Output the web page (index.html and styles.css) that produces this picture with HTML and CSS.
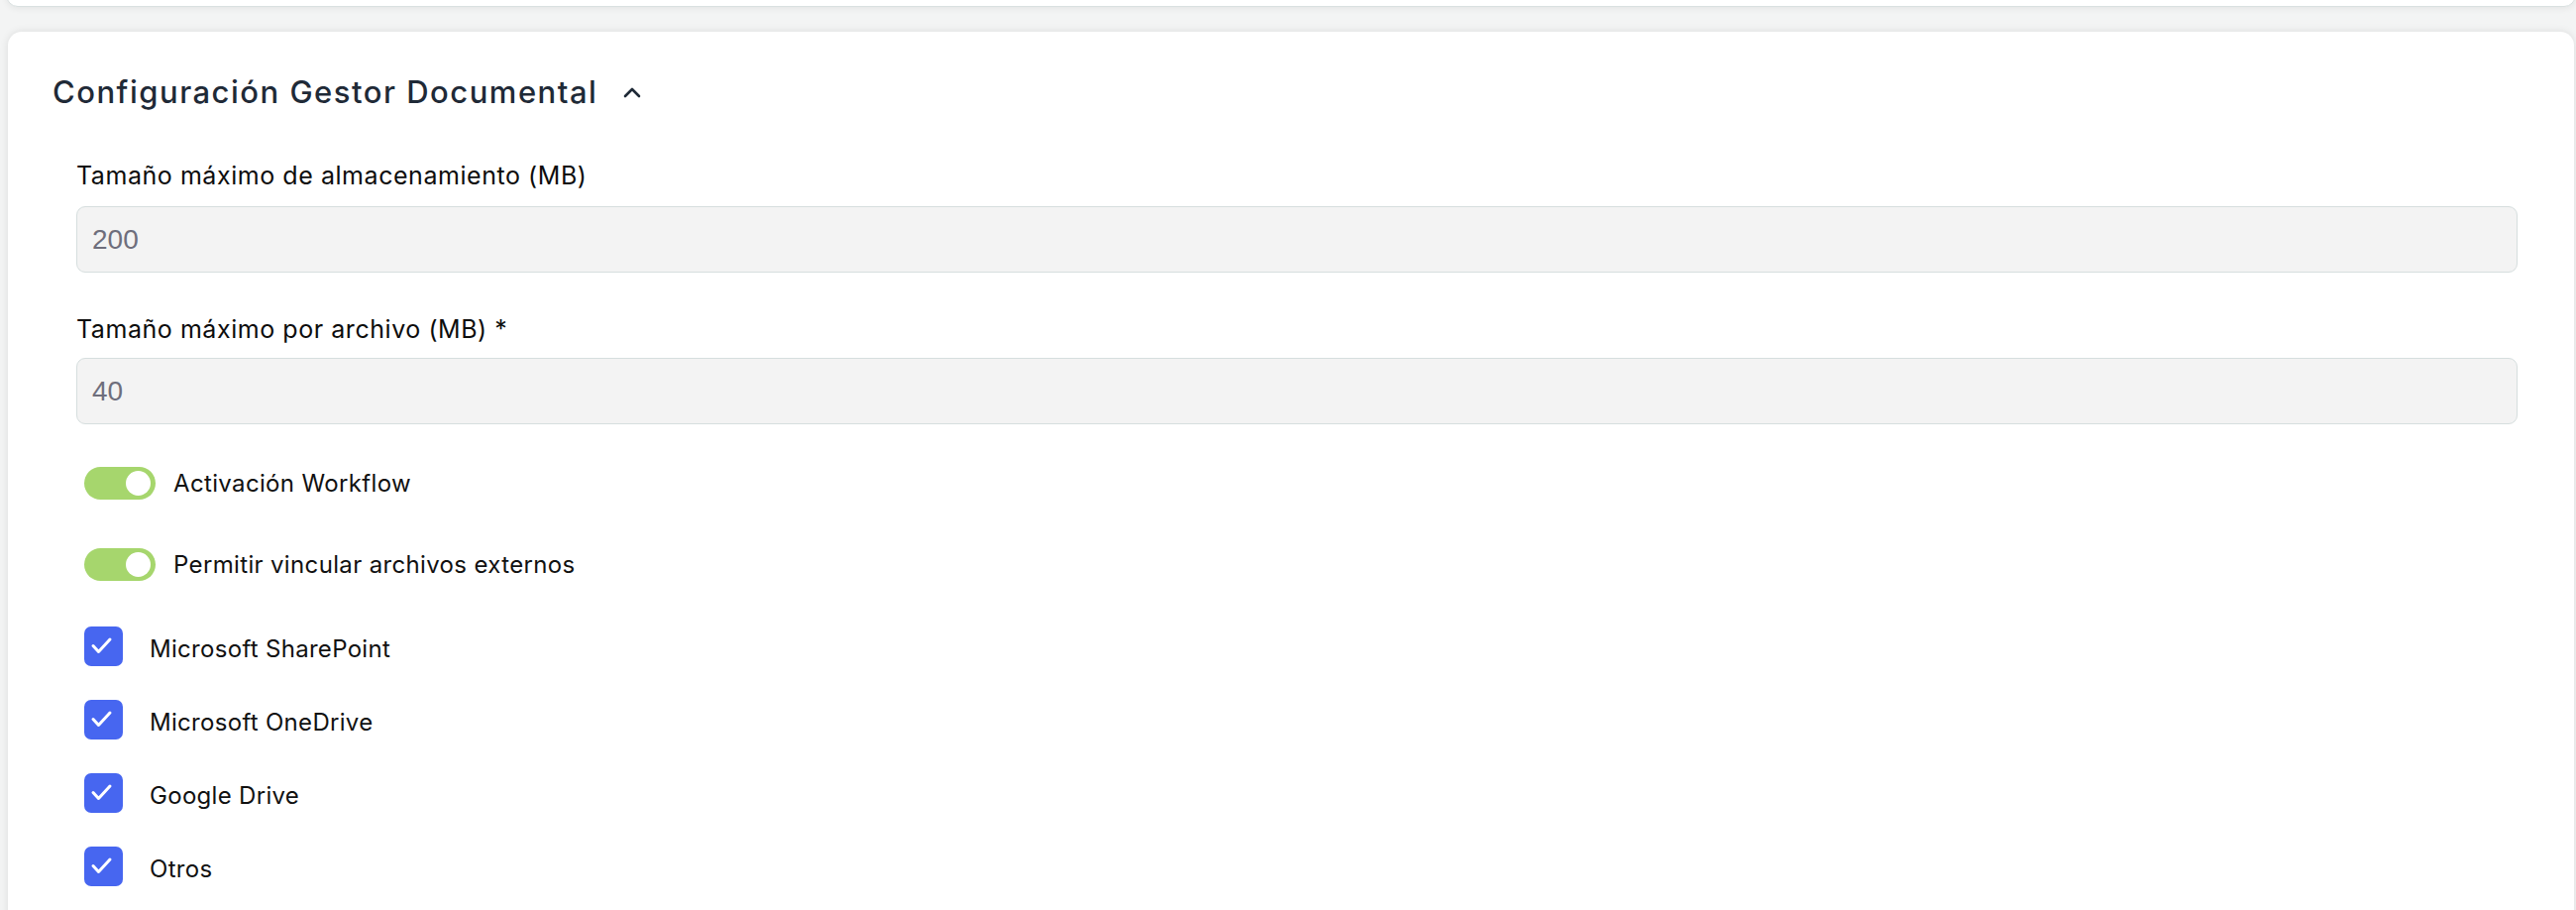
FILE: index.html
```html
<!DOCTYPE html>
<html lang="es">
<head>
<meta charset="utf-8">
<title>Configuración Gestor Documental</title>
<link rel="stylesheet" href="styles.css">
</head>
<body>
<div class="page">
  <div class="card card-top"></div>
  <section class="card card-main">
    <header class="card-head">
      <h2 class="card-title">Configuración Gestor Documental</h2>
      <svg class="caret" width="18" height="12" viewBox="0 0 18 12"><polyline points="2,10 9,3 16,10" fill="none" stroke="#1f2a37" stroke-width="2.6" stroke-linecap="round" stroke-linejoin="round"/></svg>
    </header>
    <div class="form">
      <label class="field-label label-storage">Tamaño máximo de almacenamiento (MB)</label>
      <div class="input input-storage">200</div>
      <label class="field-label label-file">Tamaño máximo por archivo (MB) *</label>
      <div class="input input-file">40</div>

      <div class="switch-row switch-first">
        <span class="switch"><span class="knob"></span></span>
        <span class="switch-text">Activación Workflow</span>
      </div>
      <div class="switch-row switch-second">
        <span class="switch"><span class="knob"></span></span>
        <span class="switch-text">Permitir vincular archivos externos</span>
      </div>

      <div class="check-row check-first">
        <span class="check"><svg width="39" height="40" viewBox="0 0 39 40"><polyline points="9,19.5 14.5,25.5 26,13" fill="none" stroke="#fff" stroke-width="3" stroke-linecap="round" stroke-linejoin="round"/></svg></span>
        <span class="check-text">Microsoft SharePoint</span>
      </div>
      <div class="check-row">
        <span class="check"><svg width="39" height="40" viewBox="0 0 39 40"><polyline points="9,19.5 14.5,25.5 26,13" fill="none" stroke="#fff" stroke-width="3" stroke-linecap="round" stroke-linejoin="round"/></svg></span>
        <span class="check-text">Microsoft OneDrive</span>
      </div>
      <div class="check-row">
        <span class="check"><svg width="39" height="40" viewBox="0 0 39 40"><polyline points="9,19.5 14.5,25.5 26,13" fill="none" stroke="#fff" stroke-width="3" stroke-linecap="round" stroke-linejoin="round"/></svg></span>
        <span class="check-text">Google Drive</span>
      </div>
      <div class="check-row">
        <span class="check"><svg width="39" height="40" viewBox="0 0 39 40"><polyline points="9,19.5 14.5,25.5 26,13" fill="none" stroke="#fff" stroke-width="3" stroke-linecap="round" stroke-linejoin="round"/></svg></span>
        <span class="check-text">Otros</span>
      </div>
    </div>
  </section>
</div>
</body>
</html>
```
FILE: styles.css
```css
html, body {
  margin: 0;
  padding: 0;
  background: #f3f4f4;
  overflow: hidden;
}
body {
  font-family: "Inter", "Noto Sans", sans-serif;
  color: #111;
}
.page {
  width: 2600px;
  height: 918px;
  overflow: hidden;
}
.card {
  background: #fff;
  box-sizing: border-box;
}
.card-top {
  margin: -20px 0 0 6px;
  height: 27px;
  border: 1px solid #d9e0e0;
  border-radius: 12px;
  box-shadow: 0 2px 6px rgba(0, 0, 0, 0.06);
}
.card-main {
  margin: 25px 2px 0 8px;
  height: 1000px;
  border-radius: 14px;
  box-shadow: 0 0 8px rgba(0, 0, 0, 0.10);
  padding: 41px 57px 0 45px;
}
.card-head {
  display: flex;
  align-items: center;
  height: 40px;
}
.card-title {
  margin: 0;
  font-size: 31px;
  line-height: 40px;
  font-weight: 500;
  color: #1f2a37;
  letter-spacing: 1.5px;
}
.caret {
  margin-left: 26px;
  margin-top: -1px;
}
.form {
  display: flex;
  flex-direction: column;
  padding-left: 24px;
}
.field-label {
  display: block;
  font-size: 25px;
  line-height: 30px;
  color: #0d0d0d;
  letter-spacing: 0.55px;
}
.label-storage { margin-top: 49px; }
.label-file { margin-top: 42px; }
.input {
  box-sizing: border-box;
  height: 67px;
  border: 1px solid #d6dede;
  border-radius: 9px;
  background: #f3f3f3;
  display: flex;
  align-items: center;
  padding-left: 15px;
  font-family: "Liberation Sans", Arial, sans-serif;
  font-size: 28px;
  color: #6e6e7c;
}
.input-storage { margin-top: 16px; }
.input-file { margin-top: 14px; }

.switch-row {
  display: flex;
  align-items: center;
  height: 33px;
  padding-left: 8px;
}
.switch-first { margin-top: 43px; }
.switch-second { margin-top: 49px; }
.switch {
  width: 72px;
  height: 33px;
  border-radius: 17px;
  background: #a6d66d;
  display: flex;
  align-items: center;
  justify-content: flex-end;
  padding-right: 5px;
  box-sizing: border-box;
}
.knob {
  width: 25px;
  height: 25px;
  border-radius: 50%;
  background: #fff;
}
.switch-text {
  margin-left: 18px;
  font-size: 24px;
  line-height: 30px;
  letter-spacing: 0.35px;
}
.check-row {
  display: flex;
  align-items: center;
  height: 40px;
  padding-left: 8px;
  margin-top: 34px;
}
.check-first { margin-top: 46px; }
.check {
  width: 39px;
  height: 40px;
  border-radius: 7px;
  background: #4766f0;
  display: block;
}
.check svg { display: block; }
.check-text {
  margin-left: 27px;
  padding-top: 5px;
  font-size: 24px;
  line-height: 30px;
  letter-spacing: 0.3px;
}
```
